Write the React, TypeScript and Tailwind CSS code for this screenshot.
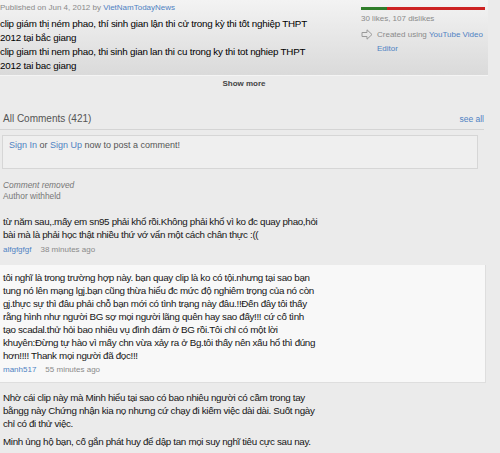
const blue = "text-[#4f82c3]";

function ArrowIcon() {
  return (
    <svg width="12" height="11" viewBox="0 0 12 11" className="shrink-0 mt-[1px]">
      <polygon
        points="1,3.5 6,3.5 6,0.8 11,5.5 6,10.2 6,7.5 1,7.5"
        fill="none"
        stroke="#9a9a9a"
        strokeWidth="1"
        strokeLinejoin="round"
      />
    </svg>
  );
}

function Meta({ user, time }: { user: string; time: string }) {
  return (
    <div className="flex gap-[9px] text-[8px] leading-[14px]">
      <span className={blue}>{user}</span>
      <span className="text-[#8a8a8a]">{time}</span>
    </div>
  );
}

const body = "text-[9.8px] leading-[13px] tracking-[-0.33px] text-[#151515]";

const App = () => {
  return (
    <div className="w-[500px] h-[453px] overflow-hidden bg-[#ebebeb] font-['Liberation_Sans',Arial,sans-serif] text-[#222]">
      {/* video info */}
      <div className="flex w-[488px] h-[76px] bg-linear-to-b from-[#f3f3f3] to-[#dadada] border-b border-[#f4f4f4]">
        <div className="w-[361px] pt-[2px]">
          <div className="text-[8px] leading-[12px] text-[#8a8a8a]">
            Published on Jun 4, 2012 by <span className={blue}>VietNamTodayNews</span>
          </div>
          <div className="mt-[3px] text-[9.8px] leading-[14px] tracking-[-0.22px] text-black">
            clip giám thị ném phao, thí sinh gian lận thi cử trong kỳ thi tốt nghiệp THPT
            <br />
            2012 tại bắc giang
            <br />
            clip giam thi nem phao, thi sinh gian lan thi cu trong ky thi tot nghiep THPT
            <br />
            2012 tai bac giang
          </div>
        </div>
        <div className="w-[124px]">
          <div className="mt-[7px] flex h-[3px]">
            <div className="w-[26px] bg-[#2f7d2a]" />
            <div className="flex-1 bg-[#cc2222]" />
          </div>
          <div className="mt-[3px] text-[8px] leading-[12px] text-[#8a8a8a]">30 likes, 107 dislikes</div>
          <div className="mt-[3px] flex gap-[4px] text-[8px] leading-[14px] text-[#8a8a8a]">
            <ArrowIcon />
            <div>
              Created using <span className={blue}>YouTube Video</span>
              <br />
              <span className={blue}>Editor</span>
            </div>
          </div>
        </div>
      </div>

      <div className="w-[488px] pt-[1px] text-center text-[8px] leading-[14px] font-bold text-[#444]">Show more</div>

      {/* comments */}
      <div className="w-[484px] mt-[21px]">
        <div className="flex justify-between items-end pb-[3px] border-b border-[#d4d4d4] pl-[3px]">
          <span className="text-[10px] leading-[14px] text-[#555]">All Comments (421)</span>
          <span className={`text-[8.5px] leading-[14px] ${blue}`}>see all</span>
        </div>

        <div className="mt-[5px] ml-[2px] w-[476px] h-[34px] border border-[#d6d6d6] bg-[#efefef] px-[6px] pt-[2px] text-[9px] leading-[14px] text-[#555]">
          <span className={blue}>Sign In</span> or <span className={blue}>Sign Up</span> now to post a comment!
        </div>

        <div className="mt-[11px] pl-[3px] text-[8.4px] leading-[11px] text-[#777]">
          <div className="italic">Comment removed</div>
          <div>Author withheld</div>
        </div>

        <div className="mt-[13px] pl-[3px]">
          <div className={body}>
            từ năm sau,.mấy em sn95 phải khổ rồi.Không phải khổ vì ko đc quay phao,hỏi
            <br />
            bài mà là phải học thật nhiều thứ vớ vẩn một cách chân thực :((
          </div>
          <div className="mt-[2px]">
            <Meta user="alfgfgfgf" time="38 minutes ago" />
          </div>
        </div>

        <div className="mt-[8px] w-[486px] bg-[#f8f8f8] border-r border-b border-[#dedede] pl-[3px] pt-[6px] pb-[5px]">
          <div className={body}>
            tôi nghĩ là trong trường hợp này. bạn quay clip là ko có tội.nhưng tại sao bạn
            <br />
            tung nó lên mạng lgj.bạn cũng thừa hiểu đc mức độ nghiêm trọng của nó còn
            <br />
            gj.thực sự thì đâu phải chỗ bạn mới có tình trạng này đâu.!!Đến đây tôi thấy
            <br />
            rằng hình như người BG sợ mọi người lãng quên hay sao đấy!!! cứ cố tình
            <br />
            tạo scadal.thử hỏi bao nhiêu vụ đình đám ở BG rồi.Tôi chỉ có một lời
            <br />
            khuyên:Đừng tự hào vì mấy chn vừa xảy ra ở Bg.tôi thấy nên xấu hổ thì đúng
            <br />
            hơn!!!! Thank mọi người đã đọc!!!
          </div>
          <div className="mt-[1px]">
            <Meta user="manh517" time="55 minutes ago" />
          </div>
        </div>

        <div className={`mt-[8px] pl-[3px] ${body}`}>
          <div>
            Nhờ cái clip này mà Minh hiểu tại sao có bao nhiêu người có cầm trong tay
            <br />
            bằngg này Chứng nhận kia nọ nhưng cứ chạy đi kiếm việc dài dài. Suốt ngày
            <br />
            chỉ có đi thử việc.
          </div>
          <div className="mt-[5px]">Minh ủng hộ bạn, cố gắn phát huy để dập tan mọi suy nghĩ tiêu cực sau nay.</div>
        </div>
      </div>
    </div>
  );
};

export default App;
